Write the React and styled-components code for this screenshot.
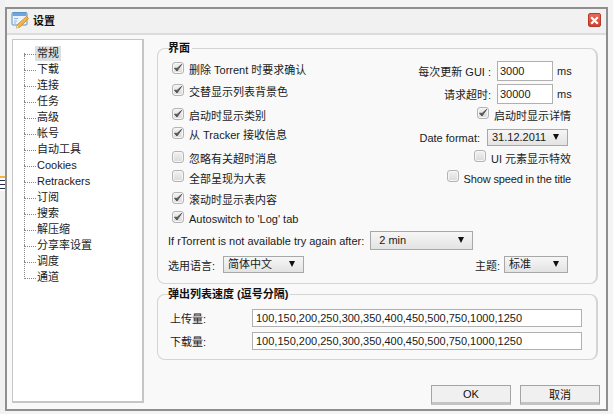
import React from 'react';
import styled, { createGlobalStyle } from 'styled-components';

const GlobalStyle = createGlobalStyle`
html, body {
  margin: 0;
  padding: 0;
  background: #f4f4f4;
}
* {
  box-sizing: border-box;
}
`;

const Page = styled.div`
display: flex;
width: 613px;
height: 414px;
overflow: hidden;
font-family: "Liberation Sans", "Noto Sans CJK SC", sans-serif;
font-size: 11px;
color: #1a1a1a;
`;
const Strip = styled.div`
flex: 0 0 5px;
display: flex;
flex-direction: column;
`;
const StripBand = styled.div`
height: ${p => p.$h}px;
background: ${p => p.$color};
`;
const Window = styled.div`
flex: 0 0 603px;
height: 404px;
margin-top: 7px;
display: flex;
flex-direction: column;
border: 2px solid #8f8f8f;
background: #f9f9f9;
`;
const TitleBar = styled.div`
flex: 0 0 26px;
display: flex;
align-items: center;
padding: 0 5px 2px 4px;
background: #f1f1f1;
border-bottom: 2px solid #dcdcdc;
`;
const Title = styled.div`
margin-left: 4px;
flex: 1;
font-size: 11px;
font-weight: bold;
color: #111;
`;
const CloseBtn = styled.button`
width: 13px;
height: 14px;
padding: 0;
display: flex;
align-items: center;
justify-content: center;
border: 1px solid #b53a2a;
border-radius: 2px;
background: linear-gradient(#e86a58, #d2402c);
`;
const Body = styled.div`
flex: 1;
display: flex;
padding: 4px 8px 0 5px;
gap: 13px;
`;
const TreePane = styled.div`
flex: 0 0 132px;
height: 364px;
padding: 5px 0 0 11px;
background: #fff;
border: 1px solid #c6c6c6;
border-width: 1px 2px 2px 1px;
`;
const TreeList = styled.ul`
margin: 0;
padding: 0;
list-style: none;
`;
const TreeItem = styled.li`
position: relative;
height: 16px;
line-height: 16px;
padding-left: 11px;
&::before {
  content: '';
  position: absolute;
  left: 0;
  top: -8px;
  width: 11px;
  height: 17px;
  border-left: 1px dotted #888;
  border-bottom: 1px dotted #888;
}
&:first-child::before {
  top: 8px;
  height: 1px;
}
`;
const TreeLabel = styled.span`
display: inline-block;
height: 15px;
line-height: 15px;
padding: 0 2px;
background: ${p => (p.$active ? '#dedede' : 'transparent')};
`;
const Main = styled.div`
flex: 0 0 441px;
min-width: 0;
display: flex;
flex-direction: column;
gap: 3px;
padding-top: 2px;
`;
const Group = styled.fieldset`
margin: 0;
min-width: 0;
padding: ${p => p.$pt}px 16px 0 10px;
height: ${p => p.$h}px;
border: 1px solid #d4d4d4;
border-width: 1px 2px 1px 1px;
border-radius: 8px;
`;
const Legend = styled.legend`
padding: 0 2px 0 0;
margin-left: 0;
font-size: 11px;
line-height: 14px;
font-weight: bold;
color: #111;
`;
const RightInset = styled.div`
margin-right: 9px;
`;
const Row = styled.div`
display: flex;
justify-content: space-between;
height: ${p => p.$h}px;
`;
const Check = styled.label`
display: flex;
margin-left: ${p => p.$indent || 0}px;
margin-top: ${p => p.$top || 0}px;
`;
const Box = styled.span`
flex: 0 0 12px;
width: 12px;
height: 12px;
display: flex;
align-items: center;
justify-content: center;
border: 1px solid #b4b4b4;
border-radius: 3px;
background: linear-gradient(#f2f2f2, #d9d9d9);
box-shadow: inset 0 0 0 1px #f6f6f6;
`;
const CheckText = styled.span`
margin-left: 5px;
margin-top: ${p => (p.$low ? 2 : 1)}px;
line-height: 14px;
white-space: nowrap;
letter-spacing: ${p => (p.$tight ? '-0.14px' : 'normal')};
`;
const Field = styled.div`
display: flex;
align-items: center;
height: 19px;
margin-top: ${p => p.$top || 0}px;
margin-right: ${p => p.$right || 0}px;
`;
const FieldLabel = styled.span`
margin-right: ${p => p.$gap}px;
margin-left: ${p => (p.$push ? 'auto' : 0)};
white-space: nowrap;
`;
const NumInput = styled.input`
width: 56px;
height: 20px;
padding: 0 2px;
font: inherit;
color: inherit;
background: #fff;
border: 1px solid #b0b0b0;
outline: none;
`;
const Unit = styled.span`
margin-left: 4px;
width: 14px;
`;
const Select = styled.div`
position: relative;
width: ${p => p.$w}px;
height: ${p => p.$h || 17}px;
line-height: ${p => (p.$h || 17) - 2}px;
padding-left: ${p => p.$pad || 4}px;
margin-right: ${p => p.$right || 0}px;
background: linear-gradient(#f6f6f6, #e3e3e3);
border: 1px solid #a8a8a8;
&::after {
  content: '';
  position: absolute;
  right: ${p => p.$arrow || 8}px;
  top: ${p => ((p.$h || 17) - 9) / 2}px;
  border-left: 3.5px solid transparent;
  border-right: 3.5px solid transparent;
  border-top: 6px solid #111;
}
`;
const WideRow = styled.div`
display: flex;
align-items: center;
height: ${p => p.$h}px;
margin-top: ${p => p.$top || 0}px;
margin-bottom: ${p => p.$bottom || 0}px;
`;
const SpeedLabel = styled.span`
flex: 0 0 84px;
padding-left: 2px;
`;
const SpeedInput = styled.input`
flex: 0 0 330px;
height: 18px;
padding: 0 3px;
font: inherit;
color: inherit;
background: #fff;
border: 1px solid #b0b0b0;
outline: none;
`;
const Footer = styled.div`
display: flex;
justify-content: flex-end;
gap: 9px;
margin-top: 22px;
margin-right: -2px;
`;
const Button = styled.button`
width: 80px;
height: 20px;
padding: 0;
font: inherit;
color: #111;
background: #f0f0f0;
border: 1px solid #a4a4a4;
border-bottom: 3px solid #c4c4c4;
`;

const Tick = () => (
  <svg width="10" height="10" viewBox="0 0 10 10">
    <path d="M1.5 5.2 L4 8 L8.6 1.4 L4.1 5.4 Z" fill="#555" stroke="#555" strokeWidth="1" strokeLinejoin="round" />
  </svg>
);

const CheckItem = ({ on, top, indent, low, tight, children }) => (
  <Check $top={top} $indent={indent}>
    <Box>{on && <Tick />}</Box>
    <CheckText $low={low} $tight={tight}>{children}</CheckText>
  </Check>
);

const SettingsIcon = () => (
  <svg width="18" height="18" viewBox="0 0 18 18">
    <rect x="1" y="1.5" width="15" height="12.5" rx="1" fill="#eaf3fb" stroke="#5b93c9" />
    <rect x="1.5" y="2" width="14" height="3" fill="#6ea6dc" />
    <path d="M3 7.5h4M3 10h3M3 12h2" stroke="#8fb4d8" strokeWidth="1" />
    <path d="M15.5 5.5 L17.5 7.5 L9 16 L5.5 17 L6.5 13.5 Z" fill="#f2b544" stroke="#c98a2a" strokeWidth="0.8" />
    <path d="M5.5 17 L6.2 14.6 L7.8 16.2 Z" fill="#f5e2c0" />
  </svg>
);

const CloseIcon = () => (
  <svg width="9" height="9" viewBox="0 0 9 9">
    <path d="M1.2 1.2 L7.8 7.8 M7.8 1.2 L1.2 7.8" stroke="#fff" strokeWidth="2.2" />
  </svg>
);

const treeItems = ['常规', '下载', '连接', '任务', '高级', '帐号', '自动工具', 'Cookies', 'Retrackers', '订阅', '搜索', '解压缩', '分享率设置', '调度', '通道'];
const speeds = '100,150,200,250,300,350,400,450,500,750,1000,1250';

export default function App() {
  return (
    <Page>
      <GlobalStyle />
      <Strip>
        <StripBand $h={176} $color="#f1f1f1" />
        <StripBand $h={2} $color="#f5b342" />
        <StripBand $h={2} $color="#fff" />
        <StripBand $h={1} $color="#2a2d4a" />
        <StripBand $h={3} $color="#fff" />
        <StripBand $h={1} $color="#2a2d4a" />
        <StripBand $h={3} $color="#fff" />
        <StripBand $h={1} $color="#2a2d4a" />
        <StripBand $h={2} $color="#fff" />
        <StripBand $h={223} $color="#f1f1f1" />
      </Strip>
      <Window>
        <TitleBar>
          <SettingsIcon />
          <Title>设置</Title>
          <CloseBtn><CloseIcon /></CloseBtn>
        </TitleBar>
        <Body>
          <TreePane>
            <TreeList>
              {treeItems.map((item, i) => (
                <TreeItem key={item}>
                  <TreeLabel $active={i === 0}>{item}</TreeLabel>
                </TreeItem>
              ))}
            </TreeList>
          </TreePane>
          <Main>
            <Group $h={243} $pt={6}>
              <Legend>界面</Legend>
              <RightInset>
                <Row $h={23}>
                  <CheckItem on top={1} indent={4}>删除 Torrent 时要求确认</CheckItem>
                  <Field>
                    <FieldLabel $gap={6}>每次更新 GUI :</FieldLabel>
                    <NumInput readOnly value="3000" />
                    <Unit>ms</Unit>
                  </Field>
                </Row>
                <Row $h={23}>
                  <CheckItem on indent={4}>交替显示列表背景色</CheckItem>
                  <Field>
                    <FieldLabel $gap={6}>请求超时:</FieldLabel>
                    <NumInput readOnly value="30000" />
                    <Unit>ms</Unit>
                  </Field>
                </Row>
                <Row $h={20}>
                  <CheckItem on top={1} indent={4}>启动时显示类别</CheckItem>
                  <CheckItem on low>启动时显示详情</CheckItem>
                </Row>
                <Row $h={23}>
                  <CheckItem on indent={4}>从 Tracker 接收信息</CheckItem>
                  <Field $top={1} $right={3}>
                    <FieldLabel $gap={7}>Date format:</FieldLabel>
                    <Select $w={81} $pad={4}>31.12.2011</Select>
                  </Field>
                </Row>
                <Row $h={20}>
                  <CheckItem top={1} indent={4}>忽略有关超时消息</CheckItem>
                  <CheckItem low>UI 元素显示特效</CheckItem>
                </Row>
                <Row $h={22}>
                  <CheckItem indent={4} low>全部呈现为大表</CheckItem>
                  <CheckItem low tight>Show speed in the title</CheckItem>
                </Row>
                <Row $h={19}>
                  <CheckItem on indent={4}>滚动时显示表内容</CheckItem>
                </Row>
                <Row $h={20}>
                  <CheckItem on indent={4}>Autoswitch to 'Log' tab</CheckItem>
                </Row>
                <WideRow $h={19} $bottom={6}>
                  <FieldLabel $gap={6}>If rTorrent is not available try again after:</FieldLabel>
                  <Select $w={103} $h={19} $pad={8}>2 min</Select>
                </WideRow>
                <WideRow $h={17}>
                  <FieldLabel $gap={8}>选用语言:</FieldLabel>
                  <Select $w={81}>简体中文</Select>
                  <FieldLabel $push $gap={4}>主题:</FieldLabel>
                  <Select $w={64} $right={3}>标准</Select>
                </WideRow>
              </RightInset>
            </Group>
            <Group $h={73} $pt={8}>
              <Legend>弹出列表速度 (逗号分隔)</Legend>
              <WideRow $h={18}>
                <SpeedLabel>上传量:</SpeedLabel>
                <SpeedInput readOnly value={speeds} />
              </WideRow>
              <WideRow $h={18} $top={5}>
                <SpeedLabel>下载量:</SpeedLabel>
                <SpeedInput readOnly value={speeds} />
              </WideRow>
            </Group>
            <Footer>
              <Button>OK</Button>
              <Button>取消</Button>
            </Footer>
          </Main>
        </Body>
      </Window>
    </Page>
  );
}
